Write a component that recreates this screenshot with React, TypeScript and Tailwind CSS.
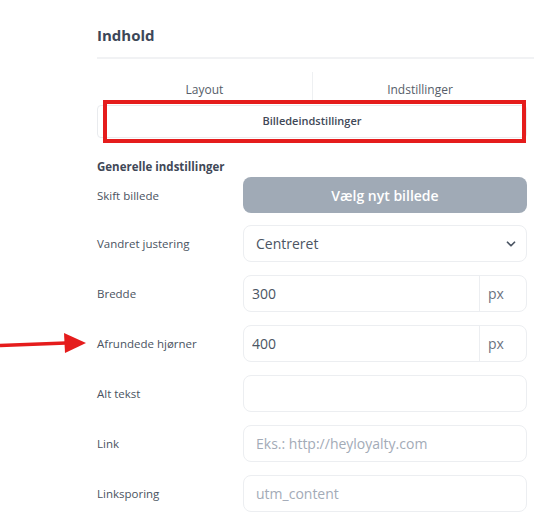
import { ChevronDown } from 'lucide-react'

interface FieldRow {
  label: string
  kind: 'select' | 'unit' | 'text'
  value?: string
  placeholder?: string
}

const rows: FieldRow[] = [
  { label: 'Vandret justering', kind: 'select', value: 'Centreret' },
  { label: 'Bredde', kind: 'unit', value: '300' },
  { label: 'Afrundede hjørner', kind: 'unit', value: '400' },
  { label: 'Alt tekst', kind: 'text', value: '' },
  { label: 'Link', kind: 'text', placeholder: 'Eks.: http://heyloyalty.com' },
  { label: 'Linksporing', kind: 'text', placeholder: 'utm_content' },
]

function Control({ row }: { row: FieldRow }) {
  if (row.kind === 'select') {
    return (
      <div className="flex h-[37px] items-center justify-between rounded-lg border border-[#eceef1] bg-white pl-3 pr-2">
        <span className="text-[14px] text-[#4b5563]">{row.value}</span>
        <ChevronDown className="h-3.5 w-3.5 text-[#4b5563]" strokeWidth={3} />
      </div>
    )
  }
  if (row.kind === 'unit') {
    return (
      <div className="flex h-[37px] rounded-lg border border-[#eceef1] bg-white">
        <input
          readOnly
          value={row.value}
          className="min-w-0 flex-1 bg-transparent px-2 text-[14px] text-[#4b5563] outline-none"
        />
        <span className="flex w-[47px] items-center border-l border-[#eceef1] pl-2 text-[14px] text-[#6b7280]">px</span>
      </div>
    )
  }
  return (
    <input
      readOnly
      value={row.value ?? ''}
      placeholder={row.placeholder}
      className="h-[37px] w-full rounded-lg border border-[#eceef1] bg-white px-3 text-[14px] text-[#4b5563] outline-none placeholder:text-[#a3abb7]"
    />
  )
}

export default function App() {
  return (
    <div
      className="relative min-h-[523px] w-[534px] bg-white text-[#4a5361]"
      style={{ fontFamily: '"Open Sans", "Noto Sans", sans-serif' }}
    >
      <div className="pl-[97px] pr-[7px] pt-[24px]">
        <h2 className="text-[15px] font-bold leading-[22px] text-[#3c4758]">Indhold</h2>
        <div className="mt-[11px] mr-[-7px] h-[2px] bg-[#f1f2f4]" />

        <div className="relative">
          <div className="grid grid-cols-2 pt-[13px]">
            <div className="flex h-[30px] items-end justify-center pb-[3px] text-[12px] text-[#555d69]">Layout</div>
            <div className="flex h-[30px] items-end justify-center border-l border-[#eef0f2] pb-[3px] text-[12px] text-[#555d69]">
              Indstillinger
            </div>
          </div>
          <div className="mt-[3px] flex h-[33px] items-center justify-center rounded-sm border border-[#e9ebee] text-[11px] font-semibold text-[#3f4857]">
            Billedeindstillinger
          </div>
          <div className="pointer-events-none absolute left-[6px] right-[1px] top-[41px] h-[43px] border-4 border-[#e51c1c]" />
        </div>

        <div className="mt-[20px] text-[11.5px] font-bold text-[#3f4857]">Generelle indstillinger</div>

        <div className="mt-[2px] flex items-center">
          <div className="w-[146px] text-[11.5px]">Skift billede</div>
          <button className="flex h-[36px] flex-1 items-center justify-center rounded-lg bg-[#a0aab6] text-[14px] font-semibold text-white">
            Vælg nyt billede
          </button>
        </div>

        <div className="mt-[12px] flex flex-col gap-[13px]">
          {rows.map((row: FieldRow) => (
            <div key={row.label} className="flex items-center">
              <div className="w-[146px] text-[11.5px]">{row.label}</div>
              <div className="flex-1">
                <Control row={row} />
              </div>
            </div>
          ))}
        </div>
      </div>

      {/* annotation arrow */}
      <svg className="absolute left-0 top-[332px]" width="88" height="22" viewBox="0 0 88 22">
        <path d="M0 13.5 L66 11" stroke="#e51c1c" strokeWidth="3.5" fill="none" />
        <path d="M64 1 L86 11 L65 21 Z" fill="#e51c1c" />
      </svg>
    </div>
  )
}
